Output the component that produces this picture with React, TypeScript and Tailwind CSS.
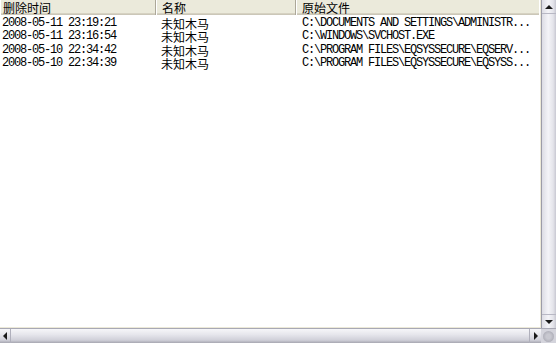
import React from "react";

type Row = { time: string; name: string; path: string };

const rows: Row[] = [
  { time: "2008-05-11 23:19:21", name: "未知木马", path: "C:\\DOCUMENTS AND SETTINGS\\ADMINISTR..." },
  { time: "2008-05-11 23:16:54", name: "未知木马", path: "C:\\WINDOWS\\SVCHOST.EXE" },
  { time: "2008-05-10 22:34:42", name: "未知木马", path: "C:\\PROGRAM FILES\\EQSYSSECURE\\EQSERV..." },
  { time: "2008-05-10 22:34:39", name: "未知木马", path: "C:\\PROGRAM FILES\\EQSYSSECURE\\EQSYSS..." },
];

const cjk = { fontFamily: '"Noto Sans CJK SC", "Noto Sans", sans-serif' };
const mono = { fontFamily: '"Liberation Mono", "DejaVu Sans Mono", monospace' };

function Arrow({ dir }: { dir: "up" | "down" | "left" | "right" }) {
  const pts: Record<string, string> = {
    up: "0,5 4,1 8,5",
    down: "0,1 4,5 8,1",
    left: "5,0 1,4 5,8",
    right: "1,0 5,4 1,8",
  };
  const vertical = dir === "up" || dir === "down";
  return (
    <svg width={vertical ? 8 : 6} height={vertical ? 6 : 8} viewBox={vertical ? "0 0 8 6" : "0 0 6 8"}>
      <polygon points={pts[dir]} fill="#1a1a1a" />
    </svg>
  );
}

function HeaderCell({ label, width, pad, last }: { label: string; width?: string; pad: string; last?: boolean }) {
  return (
    <div
      className={`flex h-full items-center ${pad} text-[12px] leading-none text-black ${width ?? "flex-1"} ${
        last ? "" : "border-r border-r-[#aca899]"
      } border-l border-l-white`}
      style={cjk}
    >
      {label}
    </div>
  );
}

export default function App() {
  return (
    <div className="flex h-[343px] w-[556px] flex-col overflow-hidden bg-white">
      <div className="flex min-h-0 flex-1">
        {/* list area */}
        <div className="flex flex-1 flex-col border-b border-r border-[#ece9d8]">
          <div className="flex h-[15px] w-[539px] bg-[#ebeadb] shadow-[inset_0_-1px_0_#cbc7b8,inset_0_-2px_0_#d6d2c2]">
            <HeaderCell label="删除时间" width="w-[156px]" pad="pl-[2px]" />
            <HeaderCell label="名称" width="w-[140px]" pad="pl-[5px]" />
            <HeaderCell label="原始文件" pad="pl-[5px]" last />
          </div>
          <div className="flex flex-col pt-[2px]">
            {rows.map((r) => (
              <div key={r.time} className="flex h-[13.3px] items-center text-[12px] leading-[13px] text-black">
                <div className="w-[161px] pl-[2px] text-[12px] tracking-[-1.2px]" style={mono}>
                  {r.time}
                </div>
                <div className="w-[141px]" style={cjk}>
                  {r.name}
                </div>
                <div className="flex-1 whitespace-pre text-[12px] tracking-[-1.2px]" style={mono}>
                  {r.path}
                </div>
              </div>
            ))}
          </div>
        </div>
        {/* vertical scrollbar */}
        <div className="flex w-[15px] flex-col border-l border-l-[#9c9ca8] bg-[linear-gradient(to_right,#dcdce4,#f4f4f8_45%,#e4e4ea_80%,#c8c8d2)]">
          <div className="flex h-[14px] items-center justify-center border-b border-b-[#b8b8c4]">
            <Arrow dir="up" />
          </div>
          <div className="flex-1" />
          <div className="flex h-[14px] items-center justify-center border-t border-t-[#b8b8c4]">
            <Arrow dir="down" />
          </div>
        </div>
      </div>
      {/* horizontal scrollbar */}
      <div className="flex h-[15px] border-t border-t-[#a8a8b4] bg-[linear-gradient(to_bottom,#f6f6f9,#e6e6ec_40%,#cfcfd8_80%,#a6a6b0)]">
        <div className="flex w-[11px] items-center justify-center border-r border-r-[#b0b0bc]">
          <Arrow dir="left" />
        </div>
        <div className="flex-1" />
        <div className="flex w-[12px] items-center justify-center border-l border-l-[#b0b0bc]">
          <Arrow dir="right" />
        </div>
        <div className="flex w-[15px] items-center justify-center bg-[#d4d4dc]">
          <div className="h-[11px] w-[11px] rounded-full bg-[radial-gradient(circle,#c8c8d0_30%,#b0b0ba_70%,#d0d0d8)]" />
        </div>
      </div>
    </div>
  );
}
